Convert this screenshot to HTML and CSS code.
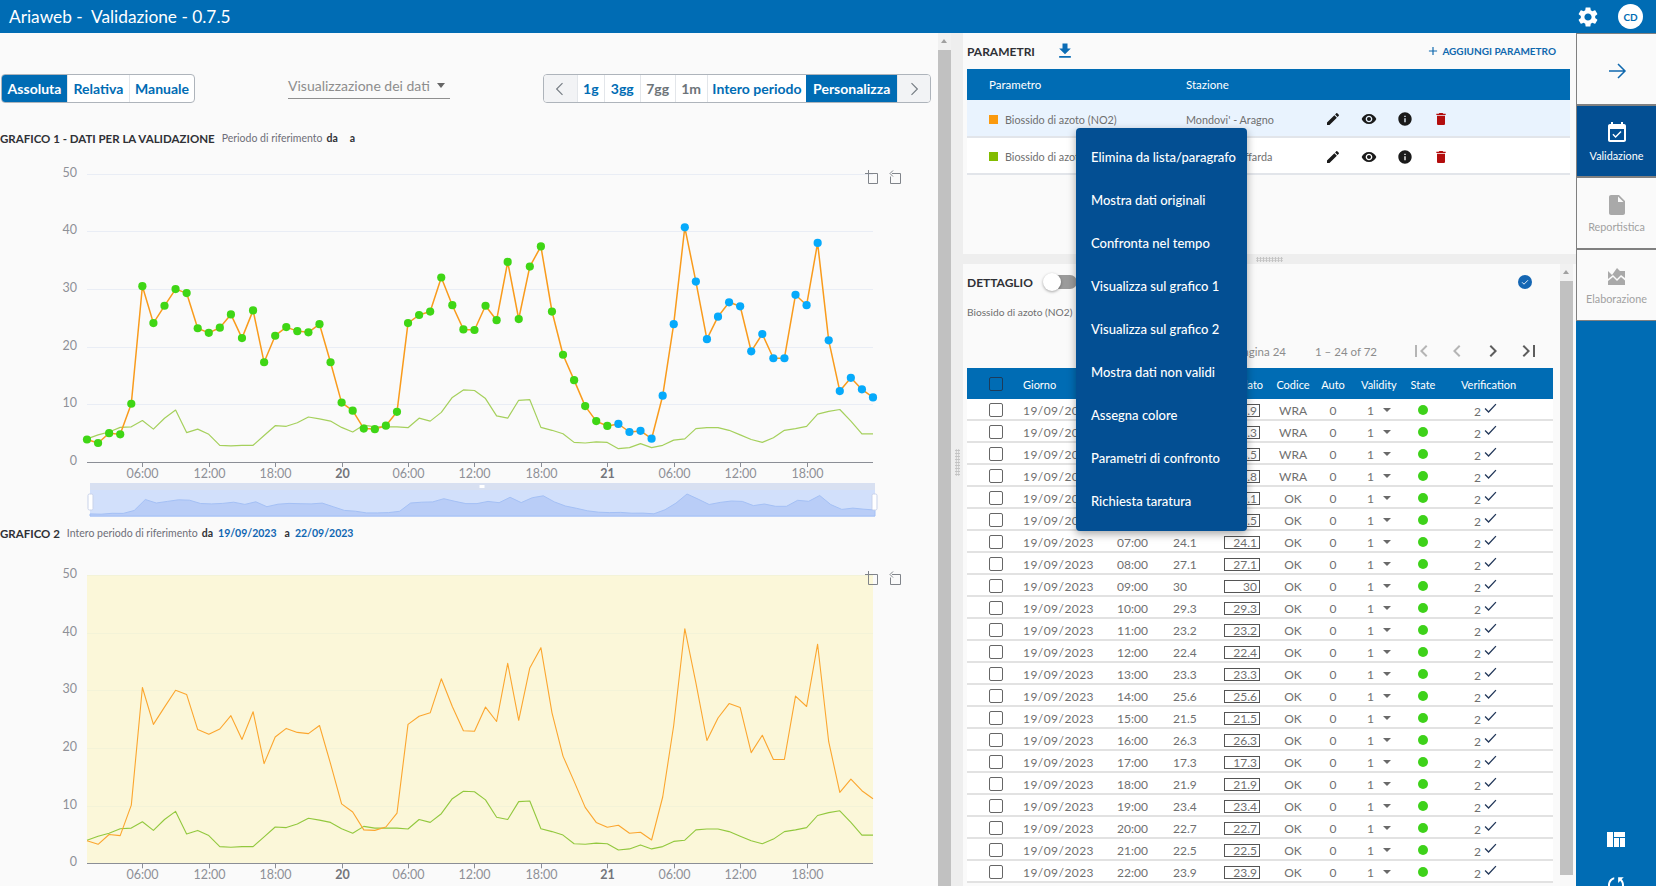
FILE: index.html
```html
<!DOCTYPE html>
<html lang="it">
<head>
<meta charset="utf-8">
<title>Ariaweb - Validazione</title>
<link rel="stylesheet" href="styles.css">
</head>
<body>
<svg class="defs" aria-hidden="true">
  <symbol id="i-edit" viewBox="0 0 24 24"><path d="M3 17.25V21h3.75L17.81 9.94l-3.75-3.75L3 17.25zM20.71 7.04c.39-.39.39-1.02 0-1.41l-2.34-2.34c-.39-.39-1.02-.39-1.41 0l-1.83 1.83 3.75 3.75 1.83-1.83z"/></symbol>
  <symbol id="i-eye" viewBox="0 0 24 24"><path d="M12 4.5C7 4.5 2.73 7.61 1 12c1.73 4.39 6 7.5 11 7.5s9.27-3.11 11-7.5c-1.73-4.39-6-7.5-11-7.5zM12 17c-2.76 0-5-2.24-5-5s2.24-5 5-5 5 2.24 5 5-2.24 5-5 5zm0-8c-1.66 0-3 1.34-3 3s1.34 3 3 3 3-1.34 3-3-1.34-3-3-3z"/></symbol>
  <symbol id="i-info" viewBox="0 0 24 24"><path d="M12 2C6.48 2 2 6.48 2 12s4.48 10 10 10 10-4.48 10-10S17.52 2 12 2zm1 15h-2v-6h2v6zm0-8h-2V7h2v2z"/></symbol>
  <symbol id="i-trash" viewBox="0 0 24 24"><path d="M6 19c0 1.1.9 2 2 2h8c1.1 0 2-.9 2-2V7H6v12zM19 4h-3.5l-1-1h-5l-1 1H5v2h14V4z"/></symbol>
</svg>

<header class="topbar">
  <div class="app-title">Ariaweb -&nbsp; Validazione - 0.7.5</div>
  <div class="top-actions">
    <svg class="gear" viewBox="0 0 24 24"><path d="M19.14 12.94c.04-.3.06-.61.06-.94 0-.32-.02-.64-.07-.94l2.03-1.58c.18-.14.23-.41.12-.61l-1.92-3.32c-.12-.22-.37-.29-.59-.22l-2.39.96c-.5-.38-1.03-.7-1.62-.94l-.36-2.54c-.04-.24-.24-.41-.48-.41h-3.84c-.24 0-.43.17-.47.41l-.36 2.54c-.59.24-1.13.57-1.62.94l-2.39-.96c-.22-.08-.47 0-.59.22L2.74 8.87c-.12.21-.08.47.12.61l2.03 1.58c-.05.3-.09.63-.09.94s.02.64.07.94l-2.03 1.58c-.18.14-.23.41-.12.61l1.92 3.32c.12.22.37.29.59.22l2.39-.96c.5.38 1.03.7 1.62.94l.36 2.54c.05.24.24.41.48.41h3.84c.24 0 .44-.17.47-.41l.36-2.54c.59-.24 1.13-.56 1.62-.94l2.39.96c.22.08.47 0 .59-.22l1.92-3.32c.12-.22.07-.47-.12-.61l-2.01-1.58zM12 15.6c-1.98 0-3.6-1.62-3.6-3.6s1.62-3.6 3.6-3.6 3.6 1.62 3.6 3.6-1.62 3.6-3.6 3.6z"/></svg>
    <div class="avatar">CD</div>
  </div>
</header>

<div class="main">
  <section class="left">
    <div class="toolbar">
      <div class="btn-group mode">
        <span class="seg seg-a active">Assoluta</span>
        <span class="seg seg-b">Relativa</span>
        <span class="seg seg-c">Manuale</span>
      </div>
      <div class="select"><span>Visualizzazione dei dati</span><i class="caret"></i></div>
      <div class="btn-group range">
        <span class="seg nav"><svg viewBox="0 0 24 24"><path d="M15 5l-7 7 7 7"/></svg></span>
        <span class="seg r1">1g</span>
        <span class="seg r2">3gg</span>
        <span class="seg r3 muted">7gg</span>
        <span class="seg r4 muted">1m</span>
        <span class="seg r5">Intero periodo</span>
        <span class="seg r6 active">Personalizza</span>
        <span class="seg nav"><svg viewBox="0 0 24 24"><path d="M9 5l7 7-7 7"/></svg></span>
      </div>
    </div>

    <div class="chart-title"><b>GRAFICO 1 - DATI PER LA VALIDAZIONE</b><span class="sub">Periodo di riferimento</span><b class="k">da</b><b class="k k2">a</b></div>
    <svg id="chart1" class="chart chart-one" viewBox="0 147 937 375"></svg>

    <div class="chart-title second"><b>GRAFICO 2</b><span class="sub">Intero periodo di riferimento</span><b class="k">da</b><b class="k date">19/09/2023</b><b class="k k3">a</b><b class="k date">22/09/2023</b></div>
    <svg id="chart2" class="chart chart-two" viewBox="0 542 937 344"></svg>
  </section>

  <div class="vscroll left-scroll"><i class="arrow-up"></i><div class="thumb"></div></div>
  <div class="vsplit"><div class="grip"></div></div>

  <section class="right">
    <div class="params">
      <div class="params-head">
        <span class="heading">PARAMETRI</span>
        <svg class="dl" viewBox="0 0 24 24"><path d="M19 9h-4V3H9v6H5l7 7 7-7zM5 18v2h14v-2H5z"/></svg>
        <span class="add"><svg viewBox="0 0 24 24"><path d="M19 13h-6v6h-2v-6H5v-2h6V5h2v6h6v2z"/></svg>AGGIUNGI PARAMETRO</span>
      </div>
      <div class="p-row p-header"><span class="p-name">Parametro</span><span class="p-st">Stazione</span></div>
      <div class="p-row selected">
        <span class="p-name"><i class="sw orange"></i>Biossido di azoto (NO2)</span><span class="p-st">Mondovi' - Aragno</span>
        <span class="p-icons">
          <svg><use href="#i-edit"/></svg><svg><use href="#i-eye"/></svg><svg><use href="#i-info"/></svg><svg class="red"><use href="#i-trash"/></svg>
        </span>
      </div>
      <div class="p-row">
        <span class="p-name"><i class="sw green"></i>Biossido di azoto (NO2)</span><span class="p-st">Revello - Staffarda</span>
        <span class="p-icons">
          <svg><use href="#i-edit"/></svg><svg><use href="#i-eye"/></svg><svg><use href="#i-info"/></svg><svg class="red"><use href="#i-trash"/></svg>
        </span>
      </div>
    </div>

    <div class="hsplit"><div class="hgrip"></div></div>

    <div class="details">
      <div class="details-body">
        <div class="d-head">
          <span class="heading">DETTAGLIO</span>
          <span class="toggle"><i></i></span>
          <span class="badge"><svg viewBox="0 0 24 24"><path d="M7 12.5l3.3 3.3L17 9"/></svg></span>
        </div>
        <div class="d-sub">Biossido di azoto (NO2)</div>
        <div class="pager">
          <span class="pg-size">Elementi per pagina 24</span>
          <span class="pg-range">1 – 24 of 72</span>
          <svg class="pg light" viewBox="0 0 24 24"><path d="M18.41 16.59L13.82 12l4.59-4.59L17 6l-6 6 6 6zM6 6h2v12H6z"/></svg>
          <svg class="pg light" viewBox="0 0 24 24"><path d="M15.41 7.41L14 6l-6 6 6 6 1.41-1.41L10.83 12z"/></svg>
          <svg class="pg" viewBox="0 0 24 24"><path d="M10 6L8.59 7.41 13.17 12l-4.58 4.59L10 18l6-6z"/></svg>
          <svg class="pg" viewBox="0 0 24 24"><path d="M5.59 7.41L10.18 12l-4.59 4.59L7 18l6-6-6-6zM16 6h2v12h-2z"/></svg>
        </div>
        <div class="t-row t-head">
          <span class="c-chk"><i class="box dark"></i></span>
          <span>Giorno</span><span>Ora</span><span>Valore</span>
          <span class="c-val-h">Validato</span><span class="c-center">Codice</span><span class="c-center">Auto</span>
          <span class="c-vld-h">Validity</span><span class="c-center">State</span><span class="c-ver-h">Verification</span>
        </div>
        <div id="rows"></div>
      </div>
      <div class="vscroll detail-scroll"><i class="arrow-up"></i><div class="thumb"></div></div>
    </div>

    <div class="menu">
      <div class="menu-item">Elimina da lista/paragrafo</div>
      <div class="menu-item">Mostra dati originali</div>
      <div class="menu-item">Confronta nel tempo</div>
      <div class="menu-item">Visualizza sul grafico 1</div>
      <div class="menu-item">Visualizza sul grafico 2</div>
      <div class="menu-item">Mostra dati non validi</div>
      <div class="menu-item">Assegna colore</div>
      <div class="menu-item">Parametri di confronto</div>
      <div class="menu-item">Richiesta taratura</div>
    </div>
  </section>

  <nav class="sidebar">
    <div class="side-item first"><svg class="thin" viewBox="0 0 24 24"><path d="M4 12h16M13 5l7 7-7 7"/></svg></div>
    <div class="side-item on"><svg viewBox="0 0 24 24"><path d="M19 3h-1V1h-2v2H8V1H6v2H5c-1.11 0-1.99.9-1.99 2L3 19c0 1.1.89 2 2 2h14c1.1 0 2-.9 2-2V5c0-1.1-.9-2-2-2zm0 16H5V8h14v11zM16.53 11.06L15.47 10l-4.88 4.88-2.12-2.12-1.06 1.06L10.59 17l5.94-5.94z"/></svg><span>Validazione</span></div>
    <div class="side-item off"><svg viewBox="0 0 24 24"><path d="M6 2c-1.1 0-1.99.9-1.99 2L4 20c0 1.1.89 2 1.99 2H18c1.1 0 2-.9 2-2V8l-6-6H6zm7 7V3.5L18.5 9H13z"/></svg><span>Reportistica</span></div>
    <div class="side-item off"><svg class="elab" viewBox="0 0 17 17"><path d="M0 3l4 4 5-7 3 3h5v7l-4-3-4 4-4-4-5 4zM0 13l5-4 4 4 4-4 4 3.500V17H0z"/></svg><span>Elaborazione</span></div>
    <div class="side-tools">
      <svg class="grid-ico" viewBox="0 0 18 15"><path d="M0 0h6v15H0zM7 0h11v5H7zM7 6h5v9H7zM13 6h5v9h-5z"/></svg>
      <svg class="sync-ico" viewBox="0 0 24 24"><path d="M12 4V1L8 5l4 4V6c3.31 0 6 2.69 6 6 0 1.01-.25 1.97-.7 2.8l1.46 1.46C19.54 15.03 20 13.57 20 12c0-4.420-3.580-8-8-8zm0 14c-3.310 0-6-2.690-6-6 0-1.010.25-1.970.7-2.800L5.240 7.740C4.460 8.970 4 10.430 4 12c0 4.420 3.580 8 8 8v3l4-4-4-4v3z"/></svg>
    </div>
  </nav>
</div>
<script src="app.js"></script>
</body>
</html>
```

FILE: styles.css
```css
* { box-sizing: border-box; }
html, body { margin: 0; height: 100%; overflow: hidden; }
body { font-family: "Lato", "Liberation Sans", sans-serif; font-size: 12px; color: #6f6f6f; background: #fafafa; }
.defs { position: absolute; width: 0; height: 0; }

.topbar { height: 33px; background: #006cb4; color: #fff; display: flex; align-items: center; justify-content: space-between; }
.app-title { font-size: 17.300px; padding: 0 0 1px 9px; }
.top-actions { display: flex; align-items: center; padding-right: 13px; }
.gear { width: 24px; height: 24px; fill: #fff; margin-right: 18px; }
.avatar { width: 25px; height: 25px; border-radius: 50%; background: #fff; color: #006cb4; font-size: 10px; font-weight: 700; display: flex; align-items: center; justify-content: center; }

.main { display: flex; height: 853px; }
.left { width: 938px; height: 853px; overflow: hidden; background: #fafafa; padding-top: 41px; }

.toolbar { display: flex; height: 29px; padding-left: 1px; }
.btn-group { display: flex; height: 29px; border: 1px solid #aeb4bb; border-radius: 4px; background: #fff; overflow: hidden; color: #006cb4; font-weight: 700; font-size: 14px; }
.seg { display: flex; align-items: center; justify-content: center; border-left: 1px solid #e3e6ea; }
.seg:first-child { border-left: 0; }
.seg.active { background: #006cb4; color: #fff; border-left: 0; }
.seg.muted { color: #6d7479; }
.seg-a { width: 65px; } .seg-b { width: 62px; } .seg-c { width: 65px; }
.mode { width: 194px; }
.select { width: 162px; height: 26px; margin: -1px 0 0 93px; border-bottom: 1px solid #8f8f8f; display: flex; align-items: center; justify-content: space-between; font-size: 14px; color: #8d8d8d; padding-right: 5px; }
.caret { width: 0; height: 0; border-left: 4px solid transparent; border-right: 4px solid transparent; border-top: 5px solid #666; }
.range { width: 388px; margin-left: 93px; background: #fff; }
.nav { width: 33px; background: #f2f3f5; }
.nav svg { width: 20px; height: 20px; fill: none; stroke: #7a8087; stroke-width: 1.500; }
.r1 { width: 27px; } .r2 { width: 36px; } .r3 { width: 35px; } .r4 { width: 32px; } .r5 { width: 100px; } .r6 { width: 91px; }

.chart-title { margin-top: 28px; height: 16px; padding-bottom: 2px; display: flex; align-items: center; color: #2f3136; font-size: 11.500px; white-space: nowrap; }
.chart-title.second { margin-top: 4px; }
.chart-title .sub { font-size: 10.500px; color: #6e6e78; margin-left: 7px; }
.chart-title .k { font-size: 10.500px; margin-left: 4px; }
.chart-title .k2 { margin-left: 12px; }
.chart-title .k3 { margin-left: 8px; }
.chart-title .date { color: #0f66b2; margin-left: 5px; }
.chart { display: block; width: 937px; }
.chart-one { height: 375px; }
.chart-two { height: 344px; }
.chart text { font-family: "Lato", "Liberation Sans", sans-serif; font-size: 12.500px; fill: #8e9097; }
.chart text.bold { font-weight: 700; fill: #72747b; }
.grid-line { stroke: #e9edf5; stroke-width: 1; }
.chart-two .grid-line { stroke: #f3f3d8; }
.axis { stroke: #8b8e96; stroke-width: 1; fill: none; }
.line-o, .line-g { fill: none; stroke-linejoin: round; }
.line-o { stroke: #f99b1c; stroke-width: 1.500; }
.line-g { stroke: #a5d05c; stroke-width: 1.200; }
.chart-two .line-o { stroke: #fba62f; stroke-width: 1.100; }
.chart-two .line-g { stroke: #92c83e; stroke-width: 1.100; }
.dot-g { fill: #3fd615; }
.dot-b { fill: #06aafb; }
.plot-bg { fill: #fbf7d9; }
.tool { fill: none; stroke: #80848a; stroke-width: 1; }
.dz-band { fill: #d8e0f1; }
.dz-body { fill: #d2e0fb; }
.dz-area { fill: #b9cdf7; stroke: #a4c0f5; stroke-width: 1; }
.dz-handle { fill: #fff; stroke: #c9d3ea; stroke-width: 1; }
.dz-grip { fill: #fff; }

.vscroll { width: 13px; background: #f1f1f1; position: relative; padding-top: 17px; flex: none; }
.vscroll .thumb { background: #c1c1c1; height: 100%; }
.arrow-up { position: absolute; left: 3px; top: 6px; width: 0; height: 0; border-left: 3.500px solid transparent; border-right: 3.500px solid transparent; border-bottom: 4px solid #a0a0a0; }
.vsplit { width: 12px; background: #eeeeee; display: flex; align-items: center; justify-content: flex-start; padding: 0 0 0 4px; }
.grip { width: 5px; height: 27px; margin-top: 6px; background-image: radial-gradient(#c4c4c4 1px, transparent 1.100px); background-size: 2.500px 3px; }

.right { width: 613px; height: 853px; position: relative; display: flex; flex-direction: column; background: #eeeeee; }
.params { height: 221px; background: #fafafa; padding: 0 6px 0 4px; }
.params-head { height: 36px; display: flex; align-items: center; }
.heading { font-weight: 700; font-size: 12px; color: #2f3136; }
.dl { width: 20px; height: 20px; fill: #0b6cb5; margin-left: 20px; }
.add { margin-left: auto; margin-right: 14px; color: #0f68ae; font-weight: 700; font-size: 10px; display: flex; align-items: center; }
.add svg { width: 14px; height: 14px; fill: #0f68ae; margin-right: 2px; }
.p-row { height: 37px; display: flex; align-items: center; border-bottom: 2px solid #e2e5ea; background: #fff; font-size: 10.800px; color: #6f6f6f; padding-top: 3px; }
.p-row.p-header { height: 31px; background: #006cb4; color: #fff; border: 0; padding-top: 0; font-size: 11.500px; }
.p-row.selected { background: #e9f3fe; height: 37.500px; }
.p-name { width: 219px; padding-left: 22px; display: flex; align-items: center; white-space: nowrap; }
.p-st { width: 139px; white-space: nowrap; }
.sw { width: 9px; height: 9px; margin-right: 7px; }
.sw.orange { background: #fb9a0e; }
.sw.green { background: #82bc00; }
.p-icons { display: flex; gap: 20px; }
.p-icons svg { width: 16px; height: 16px; fill: #1a1a1a; }
.p-icons svg.red { fill: #b30d0d; }

.hsplit { height: 10px; display: flex; justify-content: center; align-items: center; background: #eeeeee; }
.hgrip { width: 27px; height: 5px; background-image: radial-gradient(#c4c4c4 1px, transparent 1.100px); background-size: 3px 2.500px; }
.details { flex: 1; display: flex; min-height: 0; background: #f9f9f9; }
.details-body { width: 597px; padding: 0 7px 0 4px; overflow: hidden; background: #fafafa; }
.detail-scroll { height: 611px; }
.d-head { height: 36px; display: flex; align-items: center; }
.toggle { width: 32px; height: 14px; margin-left: 12px; background: #9b9b9b; border-radius: 7px; position: relative; }
.toggle i { position: absolute; left: -2px; top: -2px; width: 18px; height: 18px; border-radius: 50%; background: #fff; box-shadow: 0 1px 3px rgba(0,0,0,.35); }
.badge { margin-left: 441px; width: 14px; height: 14px; border-radius: 50%; background: #1466b3; display: flex; }
.badge svg { width: 14px; height: 14px; fill: none; stroke: #fff; stroke-width: 1.500; }
.d-sub { height: 16px; margin-top: 4px; line-height: 16px; font-size: 10.200px; color: #6f6f6f; }
.pager { height: 48px; display: flex; align-items: center; justify-content: flex-end; color: #8c8c8c; font-size: 11.500px; padding: 14px 12px 0 0; }
.pg-range { margin: 0 32px 0 29px; }
.pg { width: 24px; height: 24px; fill: #5d5d5d; margin-left: 12px; }
.pg.light { fill: #b5b5b5; }
.pg:first-of-type { margin-left: 0; }

.t-row { display: grid; grid-template-columns: 56px 94px 56px 51px 42px 54px 26px 60px 34px 113px; align-items: center; height: 22px; border-bottom: 2px solid #e2e2e2; padding-top: 2px; font-size: 12px; color: #6f6f6f; background: #fff; white-space: nowrap; }
.t-row.t-head { height: 31px; background: #006cb4; color: #fff; border: 0; padding-top: 1px; font-size: 11px; }
.c-chk { padding-left: 22px; display: flex; }
.c-date { letter-spacing: .45px; }
.box { width: 14px; height: 14px; border: 1px solid #666; border-radius: 2px; background: #fff; display: block; }
.box.dark { background: transparent; border-color: #1d3b5a; }
.c-center { text-align: center; }
.c-val-h { text-align: right; padding-right: 5px; }
.c-vld-h { padding-left: 15px; }
.c-ver-h { padding-left: 21px; }
.val-box { width: 36px; height: 13px; border: 1px solid #555; text-align: right; padding-right: 2px; line-height: 12px; font-size: 12px; font-weight: 400; display: block; }
.vld { padding-left: 21px; display: flex; align-items: center; }
.vld i { width: 0; height: 0; border-left: 4px solid transparent; border-right: 4px solid transparent; border-top: 4px solid #6a6a6a; margin-left: 9px; }
.state-dot { width: 10px; height: 10px; border-radius: 50%; background: #3ed21a; display: block; margin: 0 auto; }
.ver { padding-left: 34px; display: flex; align-items: flex-end; }
.ver span { position: relative; top: 1px; }
.ver svg { width: 13px; height: 11px; fill: none; stroke: #23385a; stroke-width: 1.200; margin-left: 3px; position: relative; top: -4px; }

.menu { position: absolute; left: 113px; top: 95px; width: 171px; height: 403px; background: #034f93; border-radius: 4px; box-shadow: 0 3px 8px rgba(0,0,0,.35); padding: 8px 0 0; color: #fff; font-size: 13px; font-weight: 500; }
.menu-item { height: 43px; line-height: 43px; padding-left: 15px; white-space: nowrap; }

.sidebar { width: 80px; background: #006cb4; display: flex; flex-direction: column; overflow: hidden; }
.side-item { height: 72px; flex: none; background: #fafafa; border: 1px solid #808080; border-right: 0; display: flex; flex-direction: column; align-items: center; justify-content: center; font-size: 10.800px; }
.side-item.first { padding-top: 3px; }
.side-item svg { width: 24px; height: 24px; }
.side-item .thin { fill: none; stroke: #0f68ae; stroke-width: 1.500; }
.side-item.on { background: #034f93; color: #fff; }
.side-item.on svg { fill: #fff; margin-bottom: 4px; }
.side-item.off { color: #a1a1a1; }
.side-item.off svg { fill: #a9a9a9; margin-bottom: 3px; }
.side-item.off svg.elab { width: 17px; height: 17px; margin: 3px 0 7px; }
.side-tools { display: flex; flex-direction: column; align-items: center; margin-top: 511px; }
.grid-ico { width: 18px; height: 15px; fill: #fff; }
.sync-ico { width: 24px; height: 24px; fill: #fff; margin-top: 26px; transform: rotate(45deg); flex: none; }
```

FILE: app.js
```js
var S1 = [3.9,3.3,5,4.8,10.1,30.5,24.1,27.1,30,29.3,23.2,22.4,23.3,25.6,21.5,26.3,17.3,21.9,23.4,22.7,22.5,23.9,17.3,10.3,8.9,5.8,5.7,6.3,8.7,24.1,25.5,26.1,32,27.2,23,22.9,27.1,24.6,34.7,24.8,33.9,37.4,26.1,18.6,14.2,9.7,7.1,6.25,6.6,5.2,5.4,4.05,11.5,23.9,40.7,31.3,21.3,25.2,27.7,27,19.2,22.2,18,18,29,27.2,38,21.1,12.3,14.6,12.6,11.2];
var S2 = [4,4.7,5.2,6,6.1,7.2,5.7,7.6,9,5.1,5.7,4.8,2.9,2.8,2.9,2.9,4.6,6.3,6.2,6.8,7.8,7.5,7.1,6,5.2,6.4,6.1,6.1,6.1,5.95,7.6,7.1,8.6,11.2,12.5,12.4,11,8,7.6,10.7,10.8,6,5.5,4.9,3.4,3.3,3.5,3.4,2.3,2.5,3.2,2.5,2.9,3.8,4,5.8,5.95,5.95,5.5,4.7,3.9,3.4,4.2,5.5,5.8,6.2,8.3,8.8,9.1,7.1,4.9,4.9];
var X0 = 87, DX = 786 / 71, NS = "http://www.w3.org/2000/svg";
var LABELS = [[5,"06:00"],[11,"12:00"],[17,"18:00"],[23,"20",1],[29,"06:00"],[35,"12:00"],[41,"18:00"],[47,"21",1],[53,"06:00"],[59,"12:00"],[65,"18:00"]];

function el(parent, name, attrs, text) {
  var n = document.createElementNS(NS, name);
  for (var k in attrs) n.setAttribute(k, attrs[k]);
  if (text !== undefined) n.textContent = text;
  parent.appendChild(n);
  return n;
}
function pts(data, fx, fy) {
  return data.map(function (v, i) { return fx(i).toFixed(1) + "," + fy(v).toFixed(1); }).join(" ");
}
function drawTool(svg, y) {
  el(svg, "path", { "class": "tool", d: "M868.500 " + (y + 3.500) + "h9v10h-9zM868.500 " + y + "v10M865 " + (y + 3.500) + "h5" });
  el(svg, "path", { "class": "tool", d: "M892 " + (y + 3.500) + "h8.500v10h-10v-7M893 " + (y + .5) + "l-3 3 3 3" });
}
function drawChart(id, y0, dots) {
  var svg = document.getElementById(id);
  var fx = function (i) { return X0 + i * DX; };
  var fy = function (v) { return y0 - v * 5.765; };
  if (!dots) el(svg, "rect", { "class": "plot-bg", x: X0, y: fy(50), width: 786, height: y0 - fy(50) });
  [10, 20, 30, 40, 50].forEach(function (v) {
    el(svg, "line", { "class": "grid-line", x1: X0, x2: 873, y1: Math.round(fy(v)) + .5, y2: Math.round(fy(v)) + .5 });
  });
  [0, 10, 20, 30, 40, 50].forEach(function (v) {
    el(svg, "text", { x: 77, y: fy(v) + 3, "text-anchor": "end" }, String(v));
  });
  el(svg, "line", { "class": "axis", x1: X0, x2: 873, y1: Math.round(y0) + .5, y2: Math.round(y0) + .5 });
  LABELS.forEach(function (l) {
    var x = Math.round(fx(l[0])) + .5;
    el(svg, "line", { "class": "axis", x1: x, x2: x, y1: y0, y2: y0 + 5 });
    var a = { x: x, y: y0 + 16, "text-anchor": "middle" };
    if (l[2]) a["class"] = "bold";
    el(svg, "text", a, l[1]);
  });
  el(svg, "polyline", { "class": "line-g", points: pts(S2, fx, fy) });
  el(svg, "polyline", { "class": "line-o", points: pts(S1, fx, fy) });
  if (dots) {
    S1.forEach(function (v, i) {
      el(svg, "circle", { "class": i < 48 ? "dot-g" : "dot-b", cx: fx(i), cy: fy(v), r: 4.1 });
    });
    el(svg, "rect", { "class": "dz-band", x: 90, y: 483, width: 785, height: 7 });
    el(svg, "rect", { "class": "dz-body", x: 90, y: 490, width: 785, height: 27 });
    var dx = 785 / 71;
    var area = "90,516 " + S1.map(function (v, i) { return (90 + i * dx).toFixed(1) + "," + (516 - v * .54).toFixed(1); }).join(" ") + " 875,516";
    el(svg, "polygon", { "class": "dz-area", points: area });
    el(svg, "rect", { "class": "dz-handle", x: 88, y: 494, width: 5, height: 16, rx: 1.5 });
    el(svg, "rect", { "class": "dz-handle", x: 872, y: 494, width: 5, height: 16, rx: 1.5 });
    el(svg, "rect", { "class": "dz-grip", x: 479.5, y: 485, width: 5, height: 3 });
  }
  drawTool(svg, dots ? 170 : 571);
}
drawChart("chart1", 462, true);
drawChart("chart2", 863.300, false);

var VALUES = ["3.9","3.3","4.5","4.8","10.1","30.5","24.1","27.1","30","29.3","23.2","22.4","23.3","25.6","21.5","26.3","17.3","21.9","23.4","22.7","22.5","23.9"];
var html = VALUES.map(function (v, i) {
  var h = (i + 1 < 10 ? "0" : "") + (i + 1) + ":00";
  return '<div class="t-row"><span class="c-chk"><i class="box"></i></span>' +
    '<span class="c-date">19/09/2023</span><span>' + h + "</span><span>" + v + "</span>" +
    '<span><b class="val-box">' + v + "</b></span>" +
    '<span class="c-center">' + (i < 4 ? "WRA" : "OK") + '</span><span class="c-center">0</span>' +
    '<span class="vld">1<i></i></span><span><b class="state-dot"></b></span>' +
    '<span class="ver"><span>2</span><svg viewBox="0 0 12 10"><path d="M1 5l3.200 3.200L11 1"/></svg></span></div>';
}).join("");
document.getElementById("rows").innerHTML = html;
```
